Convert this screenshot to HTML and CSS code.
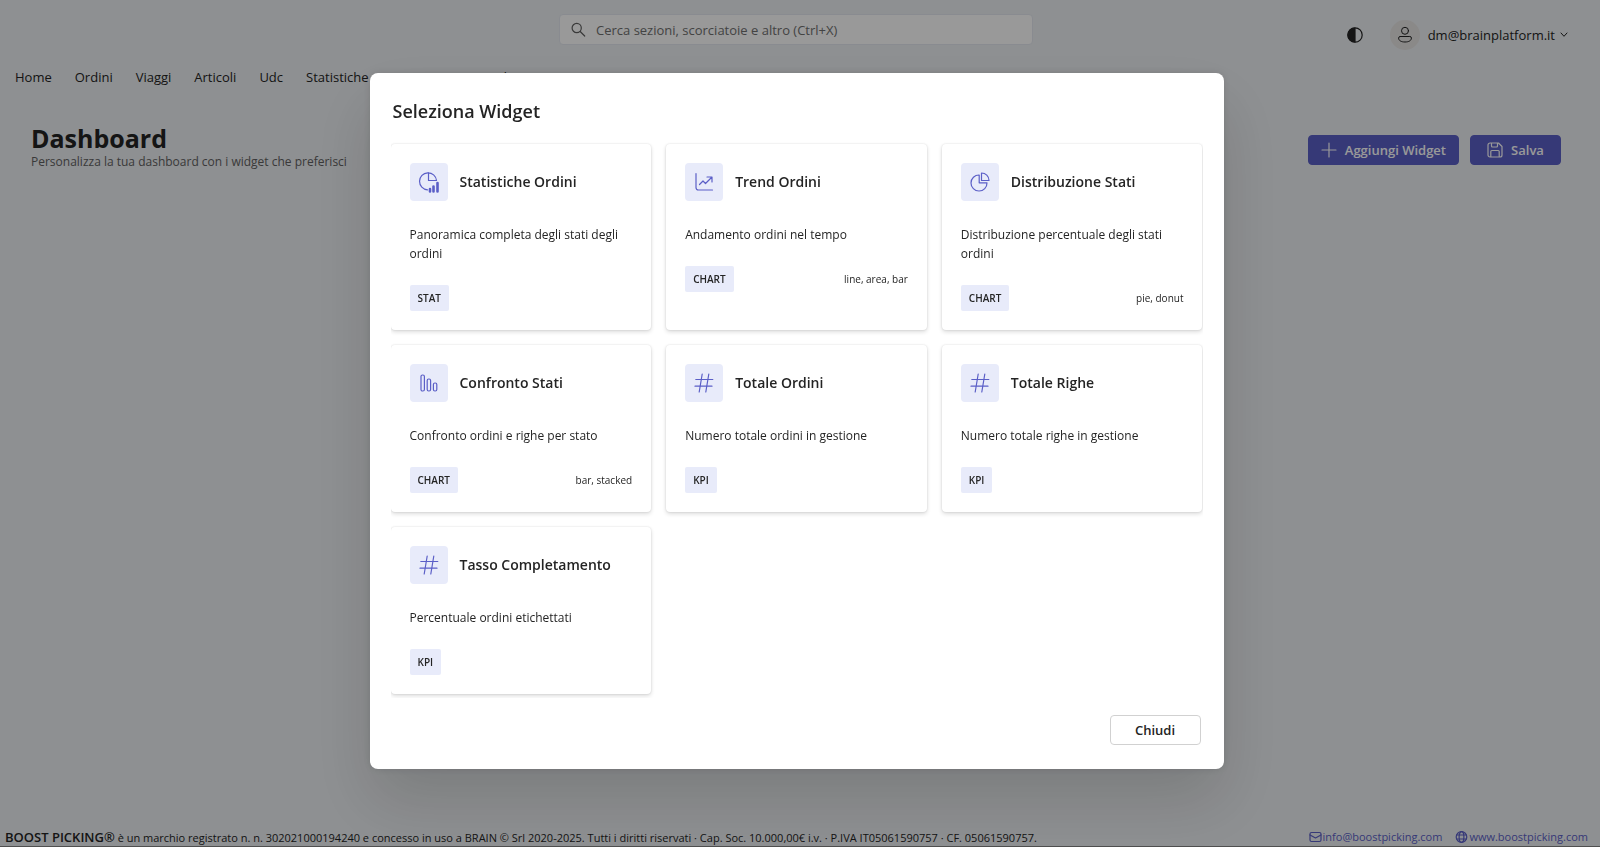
FILE: index.html
```html
<!DOCTYPE html>
<html lang="it">
<head>
<meta charset="UTF-8">
<meta name="viewport" content="width=device-width, initial-scale=1.0">
<title>Boost Picking - Dashboard</title>
<link rel="stylesheet" href="styles.css">
</head>
<body>

<svg class="sprite" aria-hidden="true">
  <symbol id="hash" viewBox="0 0 20 20"><path d="M8.2 1 5.2 19M14.8 1 11.8 19M1.800 6.500h17M1 13.200h17"/></symbol>
</svg>

<header class="header">
  <label class="search">
    <svg width="16" height="16" viewBox="0 0 16 16"><circle cx="6.7" cy="6" r="4.6"/><path d="m10.2 9.5 4.5 4.5"/></svg>
    <input type="search" placeholder="Cerca sezioni, scorciatoie e altro (Ctrl+X)" aria-label="Cerca">
  </label>
  <div class="account">
    <button class="theme" aria-label="Cambia tema">
      <svg width="16" height="16" viewBox="0 0 16 16"><circle cx="8" cy="8" r="7.2"/><path class="fill" d="M8 1a7 7 0 0 0 0 14z"/></svg>
    </button>
    <button class="user">
      <span class="avatar">
        <svg width="16" height="18" viewBox="0 0 16 18"><circle cx="8" cy="4.8" r="3.5"/><path d="M3.2 10.5h9.6q1.6 0 1.6 1.5c0 2.6-2.6 4-6.4 4s-6.4-1.4-6.4-4q0-1.500 1.600-1.500z"/></svg>
      </span>
      dm@brainplatform.it
      <svg width="8" height="6" viewBox="0 0 8 6"><path d="m1 1 3 3.300L7 1"/></svg>
    </button>
  </div>
</header>

<nav class="nav">
  <a href="#">Home</a>
  <a href="#">Ordini</a>
  <a href="#">Viaggi</a>
  <a href="#">Articoli</a>
  <a href="#">Udc</a>
  <a href="#">Statistiche</a>
  <a href="#">Magazzini</a>
  <a href="#">Riordino</a>
  <a href="#">Impostazioni</a>
</nav>

<main class="page">
  <div>
    <h1>Dashboard</h1>
    <p>Personalizza la tua dashboard con i widget che preferisci</p>
  </div>
  <div class="actions">
    <button class="btn primary add">
      <svg width="16" height="16" viewBox="0 0 16 16"><path d="M8 1v14M1 8h14"/></svg>
      Aggiungi Widget
    </button>
    <button class="btn primary save">
      <svg width="16" height="16" viewBox="0 0 16 16"><path d="M3 1h8.500L15 4.500V13a2 2 0 0 1-2 2H3a2 2 0 0 1-2-2V3a2 2 0 0 1 2-2zM4.500 1v3q0 1 1 1h4q1 0 1-1V1M3.800 15V9.500q0-1 1-1h6.400q1 0 1 1V15"/></svg>
      Salva
    </button>
  </div>
</main>

<footer class="footer">
  <p><strong>BOOST PICKING®</strong> è un marchio registrato n. n. 302021000194240 e concesso in uso a BRAIN © Srl 2020-2025. Tutti i diritti riservati · Cap. Soc. 10.000,00€ i.v. · P.IVA IT05061590757 · CF. 05061590757.</p>
  <div class="contacts">
    <a href="mailto:info@boostpicking.com"><svg width="13" height="12" viewBox="0 0 13 12"><rect x="1" y="1.500" width="11" height="9" rx="1.500"/><path d="m1 4 5.500 3L12 4"/></svg>info@boostpicking.com</a>
    <a href="#"><svg width="13" height="12" viewBox="0 0 13 12"><circle cx="6.500" cy="6" r="5.300"/><ellipse cx="6.500" cy="6" rx="2.400" ry="5.300"/><path d="M1.600 4h9.800M1.600 8h9.800"/></svg>www.boostpicking.com</a>
  </div>
</footer>

<div class="backdrop">
  <div class="dialog" role="dialog" aria-modal="true" aria-labelledby="dialogTitle">
    <h2 id="dialogTitle">Seleziona Widget</h2>
    <div class="widgets">
      <article class="card">
        <div class="card-head">
          <span class="icon"><svg width="22" height="22" viewBox="0 0 22 22"><path d="M9.500 18.800A8.500 8.500 0 1 1 18.500 9.500H10.500V1.500"/><path class="bars" d="M12 20.500v-2.500M15.500 20.500v-5M19.500 20.500v-8.500"/></svg></span>
          <h3>Statistiche Ordini</h3>
        </div>
        <p>Panoramica completa degli stati degli ordini</p>
        <div class="card-foot"><span class="badge">STAT</span></div>
      </article>
      <article class="card">
        <div class="card-head">
          <span class="icon"><svg width="20" height="20" viewBox="0 0 20 20"><path d="M2 1.500V15.500a2.500 2.500 0 0 0 2.500 2.500H18.500M5.500 12.500l3.500-3.500 2.500 2.500 6-6M13 5h5v5"/></svg></span>
          <h3>Trend Ordini</h3>
        </div>
        <p>Andamento ordini nel tempo</p>
        <div class="card-foot"><span class="badge">CHART</span><small>line, area, bar</small></div>
      </article>
      <article class="card">
        <div class="card-head">
          <span class="icon"><svg width="20" height="20" viewBox="0 0 20 20"><path d="M9.200 3v7.800H17A8 8 0 1 1 9.200 3zM11.500 1a7.500 7.500 0 0 1 7.500 7.500h-7.500z"/></svg></span>
          <h3>Distribuzione Stati</h3>
        </div>
        <p>Distribuzione percentuale degli stati ordini</p>
        <div class="card-foot"><span class="badge">CHART</span><small>pie, donut</small></div>
      </article>
      <article class="card">
        <div class="card-head">
          <span class="icon"><svg width="20" height="20" viewBox="0 0 20 20"><rect x="2" y="2" width="3.400" height="16" rx="1.500"/><rect x="8.200" y="6" width="3.400" height="12" rx="1.500"/><rect x="14.400" y="10" width="3.400" height="8" rx="1.500"/></svg></span>
          <h3>Confronto Stati</h3>
        </div>
        <p>Confronto ordini e righe per stato</p>
        <div class="card-foot"><span class="badge">CHART</span><small>bar, stacked</small></div>
      </article>
      <article class="card">
        <div class="card-head">
          <span class="icon"><svg width="20" height="20"><use href="#hash"/></svg></span>
          <h3>Totale Ordini</h3>
        </div>
        <p>Numero totale ordini in gestione</p>
        <div class="card-foot"><span class="badge">KPI</span></div>
      </article>
      <article class="card">
        <div class="card-head">
          <span class="icon"><svg width="20" height="20"><use href="#hash"/></svg></span>
          <h3>Totale Righe</h3>
        </div>
        <p>Numero totale righe in gestione</p>
        <div class="card-foot"><span class="badge">KPI</span></div>
      </article>
      <article class="card">
        <div class="card-head">
          <span class="icon"><svg width="20" height="20"><use href="#hash"/></svg></span>
          <h3>Tasso Completamento</h3>
        </div>
        <p>Percentuale ordini etichettati</p>
        <div class="card-foot"><span class="badge">KPI</span></div>
      </article>
    </div>
    <div class="dialog-actions">
      <button class="btn">Chiudi</button>
    </div>
  </div>
</div>

</body>
</html>
```
FILE: styles.css
```css
* { box-sizing: border-box; }
body { margin: 0; min-height: 100vh; display: flex; flex-direction: column; background: #edf0f3; color: #242424; font-family: "Segoe UI", "Open Sans", sans-serif; font-size: 13px; line-height: 20px; }
h1, h2, h3, p { margin: 0; }
a { color: inherit; text-decoration: none; }
button, input { font: inherit; color: inherit; }
button { cursor: pointer; }
svg { flex: none; fill: none; stroke: currentColor; stroke-width: 1.2; stroke-linecap: round; stroke-linejoin: round; }
.sprite { position: absolute; width: 0; height: 0; }

.header { display: grid; grid-template-columns: 1fr 474px 1fr; padding: 14px 32px 0 24px; }
.search { grid-column: 2; display: flex; align-items: center; gap: 10px; height: 31px; padding: 0 10px; background: #fff; border: 1px solid #e4e8f0; border-radius: 4px; color: #616161; }
.search input { flex: 1; border: 0; padding: 0; outline: none; background: none; }
.search input::placeholder { color: #707070; opacity: 1; }
.account { display: flex; justify-content: flex-end; align-items: center; gap: 27px; height: 42px; }
.account button { display: flex; align-items: center; padding: 0; border: 0; background: none; }
.theme .fill { fill: currentColor; }
.user svg { stroke-width: 1; }
.account .user { gap: 5px; }
.avatar { display: flex; align-items: center; justify-content: center; width: 30px; height: 30px; margin-right: 3px; border-radius: 50%; background: #e6e4e3; }

.nav { display: flex; gap: 23px; padding: 11px 15px 0; }

.page { flex: 1; display: flex; justify-content: space-between; align-items: flex-start; padding: 38px 39px 0 31px; }
.page h1 { font-size: 25px; line-height: 27px; }
.page p { color: #616161; font-size: 12px; }
.actions { display: flex; gap: 11px; padding-top: 10px; }
.btn { display: flex; align-items: center; justify-content: center; gap: 8px; min-width: 91px; height: 30px; padding: 0 12px; border: 1px solid #d1d1d1; border-radius: 4px; background: #fff; font-weight: 600; }
.btn.primary { background: #5b5fc7; border-color: #5b5fc7; color: #fff; }

.footer { display: flex; justify-content: space-between; align-items: center; height: 19px; padding: 0 12px 0 5px; border-bottom: 1px solid #848484; font-size: 11px; line-height: 18px; }
.footer strong { font-size: 13px; font-weight: 600; }
.contacts { display: flex; gap: 13px; color: #5b5fc7; font-size: 11px; }
.contacts a { display: flex; align-items: center; gap: 1px; }

.backdrop { position: fixed; inset: 0; display: flex; align-items: center; justify-content: center; padding: 0 7px 5px 0; background: rgba(0, 0, 0, .4); }
.dialog { width: 854px; max-width: 100%; max-height: 100%; padding: 24px 21px; background: #fff; border-radius: 8px; box-shadow: 0 0 8px rgba(0, 0, 0, .12), 0 32px 64px rgba(0, 0, 0, .14); }
.dialog h2 { padding: 1px 2px 0; font-size: 18px; line-height: 27px; font-weight: 600; }
.widgets { display: grid; grid-template-columns: repeat(3, 1fr); gap: 15px; margin-top: 15px; padding: 4px 0; overflow: hidden; }
.card { padding: 19px; border-radius: 4px; background: #fff; box-shadow: 0 0 2px rgba(0, 0, 0, .12), 0 2px 4px rgba(0, 0, 0, .14); }
.card-head { display: flex; align-items: center; gap: 12px; }
.card h3 { font-size: 14px; line-height: 22px; font-weight: 600; }
.icon { display: flex; align-items: center; justify-content: center; width: 38px; height: 38px; border-radius: 4px; background: #e8ebfa; color: #5b5fc7; }
.icon .bars { stroke-width: 2.6; }
.card p { margin: 24px 0 22px; font-size: 12px; line-height: 19px; }
.card-foot { display: flex; align-items: center; justify-content: space-between; font-size: 10px; line-height: 26px; }
.card-foot small { font-size: 10px; }
.badge { padding: 0 8px; border-radius: 2px; background: #e8ebfa; font-weight: 600; }
.dialog-actions { display: flex; justify-content: flex-end; margin-top: 17px; padding-right: 2px; }
```
